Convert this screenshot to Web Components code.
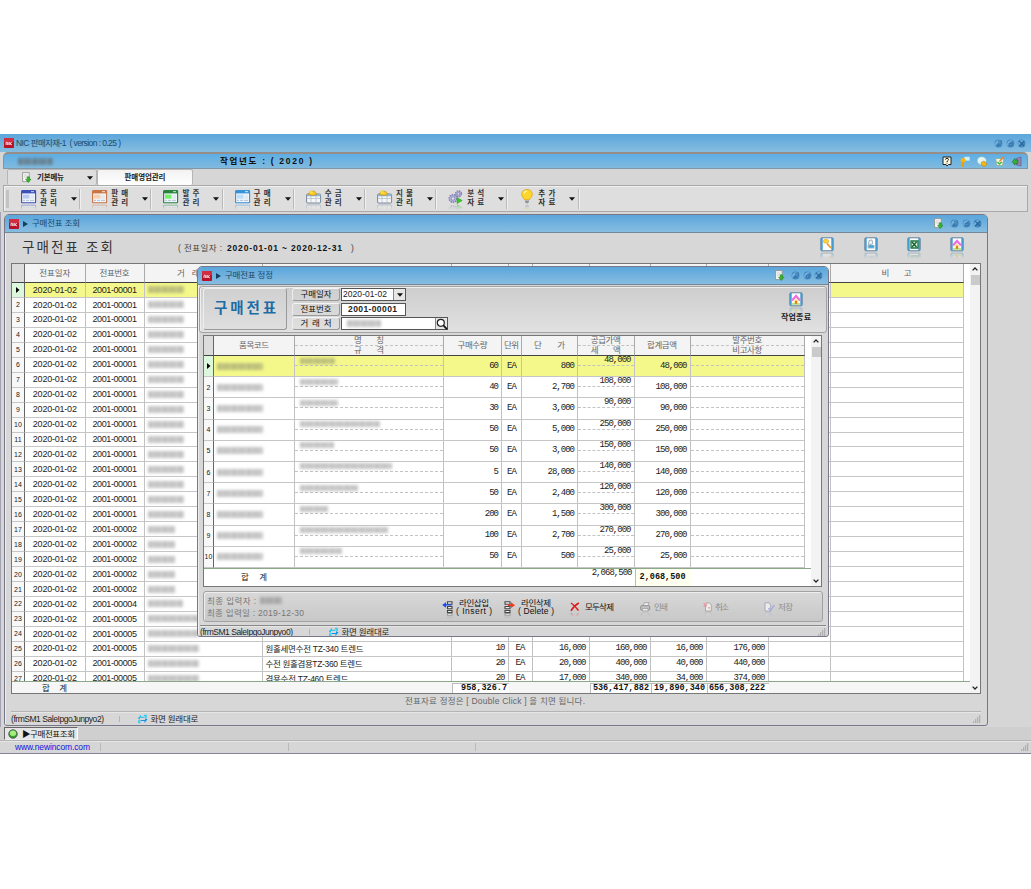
<!DOCTYPE html>
<html lang="ko">
<head>
<meta charset="utf-8">
<title>NIC 판매자재-1</title>
<style>
  body {
    margin: 0;
    padding-top: 134px;
    background: #fff;
    font-family: "Liberation Sans", "Noto Sans CJK KR", sans-serif;
    font-size: 8.5px;
    line-height: 1.2;
    color: #222;
  }
</style>
</head>
<body>
<nic-app></nic-app>

<script>
const makeTemplate = html => {
    const template = document.createElement('template');
    template.innerHTML = html;
    return template;
};

class NicElement extends HTMLElement {
    constructor() {
        super();
        this.attachShadow({ mode: 'open' });
        this.shadowRoot.appendChild(this.constructor.template.content.cloneNode(true));
    }
}

const formIcon = (color, light) => `
  <rect x=".6" y=".6" width="14" height="12.2" rx=".6" fill="#eef4fb" stroke="${color}" stroke-width="1.1"/>
  <path d="M1 1h13.2v2.4H1z" fill="${color}"/><path d="M10 1.7h3" stroke="#fff" stroke-width=".8"/>
  <path d="M2 4.6h6.5v4H2z" fill="${light}"/><path d="M9.5 6h3.5M9.5 8h3.5" stroke="#d3dce8" stroke-width=".8"/>
  <path d="M2 10.4h2m1 0h3m1 0h4" stroke="#a9b8cd" stroke-width=".8"/>`;

const moneyIcon = `
  <rect x=".6" y="4" width="14" height="9" rx="1" fill="#f4f6f8" stroke="#76869b"/>
  <path d="M1 4h13.4v2.3H1z" fill="#8fb8d8"/><path d="M1 8.5h13.4M5 6v7M10 6v7" stroke="#aeb7c2" stroke-width=".7"/>
  <path d="M2 4.4 4.6 1l4 .3L11 4.2 7.5 5.5z" fill="#f9c62c" stroke="#b98410" stroke-width=".6"/>
  <path d="M5.2 0l.8 1.4 1.5.2-1 1.1.2 1.5-1.5-.6-1.5.6.2-1.5-1-1.1 1.5-.2z" fill="#ffe03c"/>`;

const frame = `<rect x=".8" y=".8" width="12.4" height="13" rx="1" fill="#fff" stroke="#5c7f9e" stroke-width="1"/>
  <path d="M1.9 1v12.6M12.1 1v12.6" stroke="#2c94cf" stroke-width="1.5"/>`;

const gear = (x, y, r) => `<circle cx="${x}" cy="${y}" r="${r}" fill="#b9b7dc" stroke="#8582b5" stroke-width="1.5" stroke-dasharray="1.5 .8"/>
  <circle cx="${x}" cy="${y}" r="${r * .45}" fill="#e4e4f0" stroke="#7773a8" stroke-width=".7"/>`;

const orb = '<circle cx="4.5" cy="4.5" r="3.9" fill="#4386bd"/><path d="M1 6C1 2 4 .8 7 1.5 5 2.5 3 4 2 7z" fill="#74b4e2"/>';

// name: [width, height, markup]
const icons = {
    blue: [15, 14, formIcon('#3c50b8', '#b9c8f2')],
    orange: [15, 14, formIcon('#cb7542', '#f8d0ac')],
    green: [15, 14, formIcon('#26823c', '#73ef65')],
    sky: [15, 14, formIcon('#3792d8', '#b8defa')],
    money: [15, 14, moneyIcon],
    gears: [15, 14, gear(5, 8.5, 3.8) + gear(10.5, 3.8, 2.9) + '<path d="M9 7.5v6l5.2-3z" fill="#35c92a" stroke="#239218" stroke-width=".5"/>'],
    bulb: [12, 15, `<path d="M6 .5C2.8.5.7 2.6.7 5.3c0 2.2 1.9 3.2 2.7 5.4h5.2c.8-2.2 2.7-3.2 2.7-5.4C11.3 2.6 9.2.5 6 .5z" fill="#ffd62c" stroke="#d8a10c" stroke-width=".7"/>
      <path d="M3 4.5c.3-1.7 1.5-2.3 2.8-2.3" stroke="#fff8b8" fill="none" stroke-width="1.3"/><path d="M4 11.4h4v1.6l-1 1.2H5l-1-1.2z" fill="#8b95a4"/>`],
    logo: [10, 10, `<rect width="10" height="10" rx=".8" fill="#b8122a"/><path d="M0 0h10v4H0z" fill="#d22c40"/>
      <path d="M2 7V4.3h1.4V7M4.8 4.2V7m1-3v3m2-2.7L6 5.7 8 7" stroke="#fff" stroke-width=".8" fill="none"/>`],
    down: [9, 11, `<path d="M.6.6h6.6v9H.6z" fill="#f7f7f5" stroke="#8a8a88" stroke-width=".8"/><path d="M2 3h3.5M2 5h3.5" stroke="#bbb" stroke-width=".7"/>
      <path d="M5.2 4.8h2.2v2.4H9L6.3 10.5 3.5 7.2h1.7z" fill="#33b82a" stroke="#1e7e1a" stroke-width=".5"/>`],
    min: [9, 9, orb + '<path d="M2.5 6.2h3M4 2.5l3.5-.6-1 2" fill="#8cc6ea" stroke="#2a679b" stroke-width=".8"/>'],
    max: [9, 9, orb + '<path d="M3.2 4.2h2.8v2H3.2z" fill="#6aabda" stroke="#2a679b" stroke-width=".8"/>'],
    close: [9, 9, orb + '<path d="M2.2 2.2l5 5M7.2 2.2l-5 5" stroke="#286599" stroke-width="1.1"/>'],
    help: [10, 11, '<path d="M1 1h8v7.5H6.5L5 10 4 8.5H1z" fill="#fffbe0" stroke="#222" stroke-width="1"/><path d="M3.5 3.6c0-1.7 3-1.7 3 0C6.5 4.7 5 4.5 5 6M5 6.7v.9" stroke="#111" fill="none"/>'],
    key: [10, 11, '<path d="M4 .5h6v4.500H4z" fill="#d3effc" stroke="#64b4dd" stroke-width=".7"/><circle cx="3" cy="4.5" r="2.4" fill="#f8b814"/><path d="M3 6v5" stroke="#eaa106" stroke-width="2"/>'],
    disc: [10, 11, '<ellipse cx="4.7" cy="4.7" rx="4.5" ry="4" fill="#e4f5f4" stroke="#8bb8bd" stroke-width=".6"/><path d="M4 6.5l3-1.5 3 3-2 2.500-3-.8z" fill="#f1b61c" stroke="#b17f0c" stroke-width=".5"/>'],
    draw: [10, 11, '<path d="M.7 2.500h8L7.500 9.500H2z" fill="#f6f8ee" stroke="#86ab7a" stroke-width=".7"/><path d="M4.500 5.500 9 .5" stroke="#e9862e" stroke-width="1.6"/><path d="M2.5 6l2 2 2.500-2" stroke="#42b93b" stroke-width="1.600" fill="none"/>'],
    exit: [10, 11, '<path d="M4.5 2.5 9 1v9l-4.5-1z" fill="#8f87b5" stroke="#6a6290" stroke-width=".8"/><path d="M6 4v3.5H3v1.7L.2 5.8 3 2.5V4z" fill="#38ae35" stroke="#17651b" stroke-width=".5"/>'],
    find: [14, 15, frame + '<rect x="3.5" y="2.5" width="5" height="3.6" rx="1.2" fill="#ffd23a" stroke="#e3a41c" stroke-width=".6"/><path d="M7 6.5 11 11" stroke="#e99b24" stroke-width="1.7"/>'],
    print: [14, 15, frame + '<path d="M5 3.5l3-.6.8 4L4.5 8z" fill="#eef3f7" stroke="#8194a5" stroke-width=".7"/><path d="M3.5 8h7v3.5h-7z" fill="#a4b4c4"/><path d="M5 8.5h4.5v2H5z" fill="#2aa8e8"/>'],
    excel: [14, 15, frame + '<path d="M4 4h7v7H4z" fill="#e8f2e8" stroke="#1d7440" stroke-width="1.3"/><path d="M5 5l4.5 5M9.5 5 5 10" stroke="#126532" stroke-width="1.5"/>'],
    home: [14, 15, frame + '<path d="M3 8.5 7 4l4 4.5" fill="none" stroke="#f06ae6" stroke-width="2.2"/><path d="M4.5 8.5 7 5.8l2.5 2.7V12h-5z" fill="#ffe9a8"/><path d="M6 8.8h2V12H6z" fill="#ef7618"/><path d="M3 12h8" stroke="#8ec43a" stroke-width="1.2"/>'],
    insert: [11, 12, '<path d="M5.5.8H10v2.5H5.5zM5.5 5.5H10v2.2H5.5zM5.5 9.5H10V11.5H5.5z" fill="#eee" stroke="#444" stroke-width="1.1"/><path d="M10 4.5H4V6.8L.2 3.9 4 1.2v2h5" fill="#1748f0"/>'],
    remove: [11, 12, '<path d="M1 .8h5v2.5H1zM1 5.5h5v2.2H1zM1 9.5h5v2H1z" fill="#eee" stroke="#444" stroke-width="1.1"/><path d="M4 3.2h3V1.2L11 4.2 7 7V5H4z" fill="#ef3b1c"/>'],
    cross: [10, 10, '<path d="M1 1c3 2 5 4.5 7.5 7.5M8.8 1C5 3 3 5.5 1 8.8" stroke="#e01616" stroke-width="1.5" fill="none"/>'],
    printer: [11, 10, '<path d="M3 3.5 4.5.7h4.7L8 3.5" fill="#eee" stroke="#999" stroke-width=".8"/><rect x=".7" y="3.7" width="9" height="4.3" rx="1" fill="#c2c2c2" stroke="#8f8f8f"/><path d="M2.5 6.5H8v2.4H2.5z" fill="#eee" stroke="#999" stroke-width=".7"/>'],
    cancel: [9, 10, '<path d="M3 1h3.5L8.300 3v6H2.5V3" fill="#eee" stroke="#a9a0a0" stroke-width=".9"/><path d="M.7 1 4 4.3M4 1.3.7 4.6M5 5.8h2" stroke="#e09ba3" stroke-width="1.2"/>'],
    save: [11, 10, '<path d="M1 .8h4L6.7 3v6H1z" fill="#ececf0" stroke="#a4a4b0" stroke-width=".9"/><path d="M4.5 6l2 2.5 4-5.5" stroke="#a9addd" stroke-width="1.4" fill="none"/>'],
    refresh: [11, 10, '<path d="M.8 4.5 4 .8v2h3.5v1H3v2z" fill="#18bff2"/><path d="M10.5 5.3 7.5 9V7h-4V6H8V4.2z" fill="#1193e8"/><path d="M2 6v2.5h1.5M9 4V1.5H7" stroke="#2fcbf2" stroke-width="1.5" fill="none"/>'],
    lens: [12, 12, '<circle cx="4.8" cy="4.8" r="3.5" fill="#fff" stroke="#222" stroke-width="1.2"/><path d="M7.3 7.3l3.7 3.9" stroke="#111" stroke-width="1.7"/>'],
    led: [10, 10, '<circle cx="5" cy="5" r="4.2" fill="#2fa524" stroke="#555" stroke-width="1"/><ellipse cx="5" cy="4.3" rx="3.1" ry="2.7" fill="#a5ee7b"/>'],
    arrow: [6, 4, '<path d="M0 .3h6L3 3.7z" fill="#111"/>'],
    play: [5, 6, '<path d="M0 0l5 3-5 3z" fill="#124061"/>'],
    mark: [4, 6, '<path d="M0 0l3.5 3L0 6z" fill="#000"/>'],
    up: [6, 4, '<path d="M.6 3.4 3 1l2.4 2.4" stroke="#222" stroke-width="1.3" fill="none"/>'],
    dn: [6, 4, '<path d="M.6.6 3 3 5.4.6" stroke="#222" stroke-width="1.3" fill="none"/>'],
    grip: [8, 8, '<path d="M6 1h1.3M4 3h1.3M6 3h1.3M2 5h1.3M4 5h1.3M6 5h1.3M0 7h1.3M2 7h1.3M4 7h1.3M6 7h1.3" stroke="#8c8c8c" stroke-width="1.1"/>']
};

class NicIcon extends NicElement {
    static template = makeTemplate(`
<style>
  :host { display: inline-flex; flex-direction: column; flex: none; position: relative; }
  svg { display: block; overflow: visible; }
  .mirror {
    position: absolute;
    top: 100%;
    transform: scaleY(-1);
    opacity: .45;
    -webkit-mask-image: linear-gradient(transparent 55%, #000);
  }
</style>`);

    connectedCallback() {
        const [w, h, body] = icons[this.getAttribute('name')];
        const svg = cls => `<svg class="${cls}" width="${w}" height="${h}" viewBox="0 0 ${w} ${h}">${body}</svg>`;
        this.shadowRoot.innerHTML += svg('') + (this.hasAttribute('mirror') ? svg('mirror') : '');
    }
}

/* text stretched or tightened to the width in "w" */
class NicText extends NicElement {
    static template = makeTemplate(`<style>
  :host { display: inline-flex; white-space: pre; flex: none; }
  span { flex: none; white-space: pre; }
</style><span><slot></slot></span>`);

    connectedCallback() {
        const w = Number(this.getAttribute('w'));
        const span = this.shadowRoot.querySelector('span');
        const gaps = this.textContent.length - 1;
        this.style.width = w + 'px';
        if (gaps > 0) {
            const space = (w - span.getBoundingClientRect().width) / gaps;
            span.style.letterSpacing = space + 'px';
            span.style.marginRight = -space + 'px';
        }
    }
}

class NicMask extends NicElement {
    static template = makeTemplate(`<style>
  :host { display: flex; height: 7px; width: 36px; filter: blur(1.6px); opacity: .36; flex: none; }
  div { flex: 1; background: repeating-linear-gradient(90deg, #555 0 4px, #777 4px 6px, #606060 6px 13px, #808080 13px 15px); }
</style><div></div>`);

    connectedCallback() {
        this.style.width = this.getAttribute('w') + 'px';
    }
}

class NicTitlebar extends NicElement {
    static template = makeTemplate(`
<style>
  :host {
    display: flex;
    align-items: center;
    box-sizing: border-box;
    height: 18px;
    padding: 0 5px 0 4px;
    background: linear-gradient(#5ba6dc, #86bde0);
    color: #1c4a6b;
  }
  .title { flex: 1; display: flex; align-items: center; padding-left: 2px; }
  .buttons { display: flex; align-items: center; gap: 2.4px; }
</style>
<nic-icon name="logo"></nic-icon>
<div class="title"><slot></slot></div>
<div class="buttons">
  <slot name="extra"></slot>
  <nic-icon name="min"></nic-icon><nic-icon name="max"></nic-icon><nic-icon name="close"></nic-icon>
</div>`);
}

class NicStatus extends NicElement {
    static template = makeTemplate(`
<style>
  :host {
    display: flex;
    align-items: center;
    box-sizing: border-box;
    border-top: 1px solid #b4b4b4;
    box-shadow: inset 0 1px #e6e6e6;
    line-height: 10px;
  }
  .items { flex: 1; display: flex; align-items: center; }
</style>
<div class="items"><slot></slot></div>
<nic-icon name="grip"></nic-icon>`);
}

class NicMenuButton extends NicElement {
    static template = makeTemplate(`
<style>
  :host {
    display: flex;
    align-items: center;
    box-sizing: border-box;
    width: 71.2px;
    height: 20px;
    padding-left: 12px;
    border-right: 1px solid #b9b9b9;
    box-shadow: 1px 0 #f0f0f0;
    font-size: 7.5px;
    font-weight: bold;
    color: #333;
  }
  .icon { width: 15px; display: flex; justify-content: center; padding-bottom: 4px; }
  .text { display: flex; flex-direction: column; width: 17px; margin: 0 14px 0 4px; line-height: 8.5px; }
</style>
<div class="icon"></div>
<div class="text"><slot></slot></div>
<nic-icon name="arrow"></nic-icon>`);

    connectedCallback() {
        this.shadowRoot.querySelector('.icon').innerHTML = `<nic-icon name="${this.getAttribute('icon')}" mirror></nic-icon>`;
    }
}

const scrollbar = '<div class="scroll"><nic-icon name="up"></nic-icon><i></i><nic-icon name="dn"></nic-icon></div>';
const gridCss = `
  :host { display: flex; box-sizing: border-box; border: 1px solid #777; background: #fff; overflow: hidden; }
  .table { flex: 1; display: flex; flex-direction: column; min-width: 0; }
  .row { display: grid; box-sizing: border-box; flex: none; }
  .cell {
    box-sizing: border-box;
    display: flex;
    align-items: center;
    min-width: 0;
    overflow: hidden;
    white-space: pre;
    border-right: 1px solid #c2c2c2;
    border-bottom: 1px solid #c6c6c6;
    padding: 0 3px;
  }
  .num, .unit { font-family: "Liberation Mono", "Noto Sans CJK KR", monospace; font-size: 9px; letter-spacing: -.98px; }
  .code { font-size: 9px; letter-spacing: -.22px; }
  .no { letter-spacing: -.4px; }
  .num { justify-content: flex-end; }
  .mid { justify-content: center; }
  .head .cell { justify-content: center; background: #f4f4f4; border-bottom: 1px solid #444; border-right-color: #aaa; color: #666; padding: 0; }
  .head .cell:first-child { background: #dcdcdc; }
  .row .cell:first-child { justify-content: center; padding: 0; font: 7px "Liberation Sans", sans-serif; border-right-color: #666; }
  .row:not(.head) .cell:first-child { background: #f8f8f8; }
  .current .cell { background: #f4f88a; }
  .row.current .cell:first-child { background: #dcf8dc; }
  .body { overflow: hidden; flex: none; }
  .scroll { flex: none; display: flex; flex-direction: column; align-items: center; box-sizing: border-box; width: 10px; padding: 3px 0; background: #f3f3f3; }
  .scroll i { width: 9px; height: 10px; margin-top: 4px; background: #cacaca; }
  .scroll nic-icon:last-child { margin-top: auto; }
  .foot { border-top: 1px solid #8ba988; display: grid; box-sizing: border-box; flex: 1; }
  .foot b { font: bold 8.5px/11px "Liberation Mono", monospace; color: #111; text-align: right; }
`;

/* list of purchase slips */
class SlipGrid extends NicElement {
    static template = makeTemplate(`
<style>${gridCss}
  .row { grid-template-columns: 13px 60.5px 59px 118px 189px 57px 24px 57px 61px 56px 62px 62px 133px; height: 14.96px; }
  .head { height: 19px; }
  .body { height: 398px; }
  .foot { grid-template-columns: 84px 356px 57px 81px 61px 56px 62px 1fr; background: #f6f6f6; }
  .foot > * { border-left: 1px solid transparent; margin-top: 1px; padding-right: 2px; }
  .foot b { background: #fff; border: solid #bbb; border-width: 1px 0 0 1px; height: 11px; line-height: 9px; box-sizing: border-box; white-space: nowrap; }
  .foot b:nth-of-type(4) { padding-right: 4px; }
</style>
<div class="table">
  <div class="row head">
    <div class="cell"></div><div class="cell"><nic-text w="31">전표일자</nic-text></div>
    <div class="cell"><nic-text w="30">전표번호</nic-text></div><div class="cell"><nic-text w="52">거  래  처  명</nic-text></div>
    <div class="cell"></div><div class="cell"></div><div class="cell"></div><div class="cell"></div><div class="cell"></div>
    <div class="cell"></div><div class="cell"></div><div class="cell"></div><div class="cell"><nic-text w="30">비      고</nic-text></div>
  </div>
  <div class="body"></div>
  <div class="foot">
    <span style="line-height: 10px; padding-left: 29px"><nic-text w="25">합    계</nic-text></span><span></span>
    <b>958,326.7</b><span></span><b>536,417,882</b><b>19,890,340</b><b>656,308,222</b><span></span>
  </div>
</div>${scrollbar}`);

    connectedCallback() {
        const items = {
            25: ['<nic-text w="98">원홀세면수전 TZ-340 트렌드</nic-text>', '10', 'EA', '16,000', '160,000', '16,000', '176,000'],
            26: ['<nic-text w="97">수전 원홀겸용TZ-360 트렌드</nic-text>', '20', 'EA', '20,000', '400,000', '40,000', '440,000'],
            27: ['<nic-text w="83">겸용수전 TZ-460 트렌드</nic-text>', '20', 'EA', '17,000', '340,000', '34,000', '374,000']
        };
        let html = '';
        for (let i = 1; i <= 27; i++) {
            const slip = i < 17 ? 1 : i < 22 ? 2 : i === 22 ? 4 : 5;
            const mask = i < 17 ? 36 : i < 22 ? 27 : i === 22 ? 35 : 51;
            const item = items[i] || ['', '', '', '', '', '', ''];
            html += `<div class="row ${i === 1 ? 'current' : ''}">
              <div class="cell">${i === 1 ? '<nic-icon name="mark"></nic-icon>' : i}</div>
              <div class="cell code mid">2020-01-02</div><div class="cell code no mid">2001-0000${slip}</div>
              <div class="cell"><nic-mask w="${mask}"></nic-mask></div>
              <div class="cell">${item[0]}</div><div class="cell num">${item[1]}</div><div class="cell unit mid">${item[2]}</div>
              ${item.slice(3).map(v => `<div class="cell num">${v}</div>`).join('')}
              <div class="cell"></div><div class="cell"></div></div>`;
        }
        this.shadowRoot.querySelector('.body').innerHTML = html;
    }
}

/* lines of one slip, two texts per row in the name and amount columns */
class LineGrid extends NicElement {
    static template = makeTemplate(`
<style>${gridCss}
  .row { grid-template-columns: 10px 81px 149px 58px 20px 56px 56.5px 56px 114.5px; height: 21.2px; }
  .head { height: 20px; }
  .body { height: 212px; }
  .two { flex-direction: column; align-items: stretch; justify-content: flex-start; padding: 0; }
  .two > div { display: flex; align-items: center; box-sizing: border-box; height: 50%; padding: 0 3px; line-height: 9px; }
  .two > div:first-child { border-bottom: 1px dashed #c3c3c3; }
  .two.num > div { justify-content: flex-end; }
  .head .two > div { justify-content: center; }
  .foot { grid-template-columns: 92px 338.5px 56px 1fr; }
  .foot b { background: #fffff0; border-left: 1px solid #bbb; width: 50px; line-height: 17px; padding-right: 5px; }
</style>
<div class="table">
  <div class="row head">
    <div class="cell"></div><div class="cell"><nic-text w="30">품목코드</nic-text></div>
    <div class="cell two"><div><nic-text w="30">명      칭</nic-text></div><div><nic-text w="30">규      격</nic-text></div></div>
    <div class="cell"><nic-text w="30">구매수량</nic-text></div><div class="cell"><nic-text w="15">단위</nic-text></div>
    <div class="cell"><nic-text w="31">단      가</nic-text></div>
    <div class="cell two"><div><nic-text w="30">공급가액</nic-text></div><div><nic-text w="30">세      액</nic-text></div></div>
    <div class="cell"><nic-text w="30">합계금액</nic-text></div>
    <div class="cell two"><div><nic-text w="30">발주번호</nic-text></div><div><nic-text w="30">비고사항</nic-text></div></div>
  </div>
  <div class="body"></div>
  <div class="foot">
    <span style="padding-left: 37px; line-height: 17px"><nic-text w="26">합    계</nic-text></span>
    <span class="num" style="text-align: right; line-height: 9px; padding-right: 3px">2,068,500</span><b>2,068,500</b>
  </div>
</div>${scrollbar}`);

    connectedCallback() {
        const lines = [
            ['60', '800', '48,000', 35], ['40', '2,700', '108,000', 38], ['30', '3,000', '90,000', 38],
            ['50', '5,000', '250,000', 80], ['50', '3,000', '150,000', 34], ['5', '28,000', '140,000', 92],
            ['50', '2,400', '120,000', 58], ['200', '1,500', '300,000', 28], ['100', '2,700', '270,000', 88],
            ['50', '500', '25,000', 42]
        ];
        this.shadowRoot.querySelector('.body').innerHTML = lines.map(([qty, price, sum, mask], i) => `
          <div class="row ${i ? '' : 'current'}">
            <div class="cell">${i ? i + 1 : '<nic-icon name="mark"></nic-icon>'}</div>
            <div class="cell"><nic-mask w="46"></nic-mask></div>
            <div class="cell two"><div><nic-mask w="${mask}" style="margin-left: 2px; height: 6px"></nic-mask></div><div></div></div>
            <div class="cell num">${qty}</div><div class="cell unit mid">EA</div><div class="cell num">${price}</div>
            <div class="cell two num"><div>${sum}</div><div></div></div><div class="cell num">${sum}</div>
            <div class="cell two"><div></div><div></div></div>
          </div>`).join('');
    }
}

class NicWindow extends NicElement {
    static template = makeTemplate(`
<style>
  :host {
    display: flex;
    flex-direction: column;
    box-sizing: border-box;
    border: 1px solid #777789;
    border-radius: 5px 5px 3px 3px;
    background: #d7d7d7;
    overflow: hidden;
  }
  nic-titlebar { flex: none; border-bottom: 1px solid #75889a; }
  .title { display: flex; align-items: center; gap: 4px; padding-left: 2px; }
  nic-icon[slot] { margin-right: 5px; }
  .content { flex: 1; display: flex; flex-direction: column; padding: 0 6px; box-shadow: inset 1px 0 #eee; }
</style>
<nic-titlebar>
  <div class="title"><nic-icon name="play"></nic-icon><slot name="title"></slot></div>
  <nic-icon name="down" slot="extra"></nic-icon>
</nic-titlebar>
<div class="content"><slot></slot></div>`);
}

class SlipList extends NicElement {
    static template = makeTemplate(`
<style>
  nic-window { width: 984px; height: 512px; }
  .head { display: flex; align-items: center; height: 30px; flex: none; padding: 0 17px 0 11px; box-sizing: border-box; }
  h1 { display: flex; margin: 0 65px 1px 0; font-size: 13.5px; line-height: 20px; font-weight: normal; color: #333; }
  .range { display: flex; align-items: center; color: #444; flex: 1; }
  .range b { display: flex; color: #111; margin: 0 9px 0 5px; }
  .tools { display: flex; gap: 29.2px; padding-bottom: 7px; }
  slip-grid { height: 431px; flex: none; }
  .hint { height: 17px; flex: none; padding-left: 394px; line-height: 15px; color: #666; }
  nic-status { height: 14px; }
  .sep { width: 1px; height: 6px; background: #b5b5b5; margin: 0 17px 0 15px; }
</style>
<nic-window>
  <nic-text w="48" slot="title">구매전표 조회</nic-text>
  <div class="head">
    <h1><nic-text w="91">구매전표 조회</nic-text></h1>
    <div class="range"><nic-text w="44">( 전표일자 :</nic-text><b><nic-text w="115">2020-01-01 ~ 2020-12-31</nic-text></b>)</div>
    <div class="tools">
      <nic-icon name="find" mirror></nic-icon><nic-icon name="print" mirror></nic-icon>
      <nic-icon name="excel" mirror></nic-icon><nic-icon name="home" mirror></nic-icon>
    </div>
  </div>
  <slip-grid></slip-grid>
  <div class="hint"><nic-text w="180">전표자료 정정은 [ Double Click ] 을 치면 됩니다.</nic-text></div>
  <nic-status><nic-text w="93">(frmSM1 SaleIpgoJunpyo2)</nic-text><div class="sep"></div><nic-icon name="refresh"></nic-icon>&nbsp;<nic-text w="48">화면 원래대로</nic-text></nic-status>
</nic-window>`);
}

class SlipEditor extends NicElement {
    static template = makeTemplate(`
<style>
  nic-window { width: 632px; height: 371px; }
  .head, .actions {
    display: flex;
    box-sizing: border-box;
    flex: none;
    border: 1px solid #a2a2a2;
    border-radius: 3px;
    background: linear-gradient(#cdcdcd, #e1e1e1);
    box-shadow: inset 1px 1px #eee;
  }
  .head { height: 47px; margin: 1px -5px 0; padding: 1px 15px 0 3px; }
  .name {
    display: flex;
    align-items: center;
    justify-content: center;
    box-sizing: border-box;
    width: 84px;
    height: 42px;
    border: 1px solid;
    border-color: #eee #999 #999 #eee;
    border-radius: 3px;
    background: linear-gradient(#d0d0d0, #dedede);
    font-size: 14.5px;
    font-weight: bold;
    color: #1c6ca5;
  }
  .fields { flex: 1; display: grid; grid-template-columns: 48px auto; grid-auto-rows: 13px; gap: 1.5px 1px; margin-left: 5px; justify-content: start; }
  .fields label { display: flex; align-items: center; justify-content: center; border: 1px solid; border-color: #f4f4f4 #999 #999 #eee; border-radius: 3px; box-sizing: border-box; height: 13px; color: #111; }
  .input { display: flex; align-items: center; box-sizing: border-box; height: 13px; width: 65px; background: #fff; border: 1px solid #555; padding-left: 1px; }
  .input b { display: flex; }
  .input.wide { width: 107px; padding-left: 5px; }
  .input i { display: flex; align-items: center; justify-content: center; width: 11px; height: 11px; background: #e6e6e6; border-left: 1px solid #888; margin-left: auto; }
  .end { display: flex; flex-direction: column; align-items: center; gap: 6px; padding-top: 4px; font-weight: bold; font-size: 8px; line-height: 10px; }
  line-grid { margin-top: 2px; height: 252px; flex: none; margin-left: -1px; width: 619px; }
  .actions { height: 31px; margin-top: 4px; padding-left: 3px; align-items: center; margin-right: -1px; margin-left: -1px; background: linear-gradient(#d8d8d8, #c8c8c8); }
  .info { color: #777; line-height: 12px; width: 235px; }
  .info div { display: flex; align-items: center; height: 12px; }
  .btn { display: flex; align-items: center; gap: 3px; line-height: 8px; color: #111; }
  .btn.far { gap: 5px; }
  .btn span { display: flex; flex-direction: column; align-items: center; }
  .btn.off { color: #8d8d8d; gap: 3px; }
  nic-status { margin: 3px -4px 0; height: 12px; border-top-color: #888; }
  .sep { width: 1px; height: 6px; background: #b5b5b5; margin: 0 18px 0 16px; }
</style>
<nic-window>
  <nic-text w="48" slot="title">구매전표 정정</nic-text>
  <div class="head">
    <div class="name"><nic-text w="62">구매전표</nic-text></div>
    <div class="fields">
      <label><nic-text w="31">구매일자</nic-text></label>
      <div class="input"><nic-text w="44">2020-01-02</nic-text><i><nic-icon name="arrow"></nic-icon></i></div>
      <label><nic-text w="31">전표번호</nic-text></label>
      <div class="input" style="padding-left: 6px"><b><nic-text w="49">2001-00001</nic-text></b></div>
      <label><nic-text w="31">거 래 처</nic-text></label>
      <div class="input wide"><nic-mask w="34"></nic-mask><i><nic-icon name="lens"></nic-icon></i></div>
    </div>
    <div class="end"><nic-icon name="home" mirror></nic-icon><nic-text w="30">작업종료</nic-text></div>
  </div>
  <line-grid></line-grid>
  <div class="actions">
    <div class="info"><div><nic-text w="49">최종 입력자 :</nic-text><nic-mask w="22" style="margin-left: 4px"></nic-mask></div><div><nic-text w="97">최종 입력일 : 2019-12-30</nic-text></div></div>
    <div class="btn" style="width: 62px"><nic-icon name="insert" mirror></nic-icon><span><nic-text w="30">라인삽입</nic-text><nic-text w="36">( Insert )</nic-text></span></div>
    <div class="btn" style="width: 66px"><nic-icon name="remove" mirror></nic-icon><span><nic-text w="30">라인삭제</nic-text><nic-text w="36">( Delete )</nic-text></span></div>
    <div class="btn far" style="width: 70px"><nic-icon name="cross" mirror></nic-icon><nic-text w="29">모두삭제</nic-text></div>
    <div class="btn off" style="width: 63px"><nic-icon name="printer" mirror></nic-icon><nic-text w="14">인쇄</nic-text></div>
    <div class="btn off" style="width: 61px"><nic-icon name="cancel" mirror></nic-icon><nic-text w="14">취소</nic-text></div>
    <div class="btn off"><nic-icon name="save" mirror></nic-icon><nic-text w="15">저장</nic-text></div>
  </div>
  <nic-status><nic-text w="93">(frmSM1 SaleIpgoJunpyo0)</nic-text><div class="sep"></div><nic-icon name="refresh"></nic-icon>&nbsp;<nic-text w="48">화면 원래대로</nic-text></nic-status>
</nic-window>`);
}

class NicApp extends NicElement {
    static template = makeTemplate(`
<style>
  :host { display: flex; flex-direction: column; height: 620px; background: #d6d6d6; overflow: hidden; }
  .menubar {
    display: flex;
    align-items: center;
    box-sizing: border-box;
    height: 17px;
    flex: none;
    margin: 0 3px;
    padding: 0 5px 0 14px;
    border: 1px solid #8097a8;
    border-top: 2px solid #978d88;
    border-radius: 5px 5px 0 0;
    background: linear-gradient(#5daee5, #80bade);
  }
  .year { font-weight: bold; color: #111; margin-left: 167px; flex: 1; display: flex; }
  .menubar .icons { display: flex; gap: 7.5px; }
  .tabs { display: flex; height: 16px; flex: none; padding-left: 7px; font-weight: bold; font-size: 7.5px; }
  .tab { display: flex; align-items: center; box-sizing: border-box; width: 90px; padding: 0 3px 0 14px; border: 1px solid #b5b5b5; border-bottom: 0; border-radius: 2px; background: #dedede; }
  .tab nic-text { margin: 0 auto 0 6px; }
  .tab.on { width: 96px; padding: 0; justify-content: center; background: linear-gradient(#f2f2f2, #fff); }
  .tab.on nic-text { margin: 0; }
  .toolbar { display: flex; align-items: center; box-sizing: border-box; height: 27px; flex: none; margin: 0 3px; border: 1px solid #a9a9a9; background: #dedede; box-shadow: inset 1px 1px #f0f0f0; }
  .toolbar .handle { width: 3px; height: 18px; margin: 0 0 0 2px; background: #c3c3c3; }
  .desktop { position: relative; height: 515px; flex: none; border-left: 1px solid #a2a2b0; box-sizing: border-box; }
  slip-list, slip-editor { position: absolute; }
  slip-list { left: 3px; top: 2px; }
  slip-editor { left: 196px; top: 54px; }
  .tasks { display: flex; height: 13px; flex: none; padding-left: 4px; background: #cfcfcf; }
  .task { display: flex; align-items: center; gap: 4px; width: 74px; box-sizing: border-box; padding-left: 3px; border: 1px solid; border-color: #666 #fff #eee #666; background: #e5e5e5; color: #111; }
  .task nic-text { line-height: 10px; }
  nic-status { height: 14px; color: #1414e0; border-bottom: 1px solid #85859a; padding: 0 2px 0 15px; }
  .sep { width: 1px; height: 8px; background: #b9b9b9; }
</style>
<nic-titlebar><nic-text w="105">NIC 판매자재-1  ( version : 0.25 )</nic-text></nic-titlebar>
<div class="menubar">
  <nic-mask w="35" style="opacity: .55"></nic-mask>
  <div class="year"><nic-text w="92">작업년도 : ( 2020 )</nic-text></div>
  <div class="icons">
    <nic-icon name="help"></nic-icon><nic-icon name="key"></nic-icon><nic-icon name="disc"></nic-icon><nic-icon name="draw"></nic-icon><nic-icon name="exit"></nic-icon>
  </div>
</div>
<div class="tabs">
  <div class="tab"><nic-icon name="down"></nic-icon><nic-text w="27">기본메뉴</nic-text><nic-icon name="arrow"></nic-icon></div>
  <div class="tab on"><nic-text w="41">판매영업관리</nic-text></div>
</div>
<div class="toolbar">
  <div class="handle"></div>
  <nic-menu-button icon="blue"><nic-text w="17">주 문</nic-text><nic-text w="17">관 리</nic-text></nic-menu-button>
  <nic-menu-button icon="orange"><nic-text w="17">판 매</nic-text><nic-text w="17">관 리</nic-text></nic-menu-button>
  <nic-menu-button icon="green"><nic-text w="17">발 주</nic-text><nic-text w="17">관 리</nic-text></nic-menu-button>
  <nic-menu-button icon="sky"><nic-text w="17">구 매</nic-text><nic-text w="17">관 리</nic-text></nic-menu-button>
  <nic-menu-button icon="money"><nic-text w="17">수 금</nic-text><nic-text w="17">관 리</nic-text></nic-menu-button>
  <nic-menu-button icon="money"><nic-text w="17">지 불</nic-text><nic-text w="17">관 리</nic-text></nic-menu-button>
  <nic-menu-button icon="gears"><nic-text w="17">분 석</nic-text><nic-text w="17">자 료</nic-text></nic-menu-button>
  <nic-menu-button icon="bulb"><nic-text w="17">추 가</nic-text><nic-text w="17">자 료</nic-text></nic-menu-button>
</div>
<div class="desktop">
  <slip-list></slip-list>
  <slip-editor></slip-editor>
</div>
<div class="tasks"><div class="task"><nic-icon name="led"></nic-icon><nic-text w="53">▶구매전표조회</nic-text></div></div>
<nic-status>
  <nic-text w="75">www.newincom.com</nic-text>
  <div class="sep" style="margin-left: 10px"></div><div class="sep" style="margin-left: 187px"></div><div class="sep" style="margin-left: 186px"></div>
</nic-status>`);
}

customElements.define('nic-app', NicApp);
customElements.define('nic-titlebar', NicTitlebar);
customElements.define('nic-status', NicStatus);
customElements.define('nic-menu-button', NicMenuButton);
customElements.define('slip-list', SlipList);
customElements.define('slip-editor', SlipEditor);
customElements.define('nic-window', NicWindow);
customElements.define('slip-grid', SlipGrid);
customElements.define('line-grid', LineGrid);
customElements.define('nic-icon', NicIcon);
customElements.define('nic-mask', NicMask);
// measures its own text, so it comes after everything that styles it
customElements.define('nic-text', NicText);
</script>
</body>
</html>
